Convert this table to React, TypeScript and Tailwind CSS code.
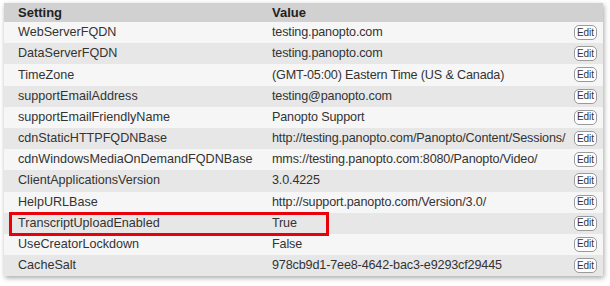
const rows: [string, string][] = [
  ["WebServerFQDN", "testing.panopto.com"],
  ["DataServerFQDN", "testing.panopto.com"],
  ["TimeZone", "(GMT-05:00) Eastern Time (US & Canada)"],
  ["supportEmailAddress", "testing@panopto.com"],
  ["supportEmailFriendlyName", "Panopto Support"],
  ["cdnStaticHTTPFQDNBase", "http://testing.panopto.com/Panopto/Content/Sessions/"],
  ["cdnWindowsMediaOnDemandFQDNBase", "mms://testing.panopto.com:8080/Panopto/Video/"],
  ["ClientApplicationsVersion", "3.0.4225"],
  ["HelpURLBase", "http://support.panopto.com/Version/3.0/"],
  ["TranscriptUploadEnabled", "True"],
  ["UseCreatorLockdown", "False"],
  ["CacheSalt", "978cb9d1-7ee8-4642-bac3-e9293cf29445"],
];

const App = () => {
  return (
    <main className="relative h-[286px] w-[610px] bg-white pl-[4px] pt-[3px] font-['Liberation_Sans',Arial,sans-serif] text-[12.6px] text-[#333]">
      <div className="w-[599px] shadow-[1px_2px_5px_rgba(0,0,0,0.35)]">
        <div className="grid h-[19px] grid-cols-[254px_1fr] items-center bg-[#d1d1d1] text-[13px] font-bold text-[#222]">
          <div className="pl-[14px]">Setting</div>
          <div className="pl-[14px]">Value</div>
        </div>
        {rows.map(([name, value], i) => (
          <div
            key={name}
            className={
              "grid h-[21.2px] grid-cols-[254px_1fr_29px] items-center " +
              (i % 2 === 0 ? "bg-[#f6f6f6]" : "bg-[#e7e7e7]")
            }
          >
            <div className="pl-[14px] whitespace-nowrap">{name}</div>
            <div className="pl-[14px] whitespace-nowrap tracking-[-0.15px]">{value}</div>
            <button className="flex h-[15px] w-[23px] items-center justify-center rounded-[5px] border border-[#9a9a9a] bg-white text-[10px] leading-none text-[#333]">
              Edit
            </button>
          </div>
        ))}
      </div>
      <div className="absolute left-[9px] top-[212px] h-[24px] w-[320px] border-[3px] border-[#e8000b]" />
    </main>
  );
};

export default App;
